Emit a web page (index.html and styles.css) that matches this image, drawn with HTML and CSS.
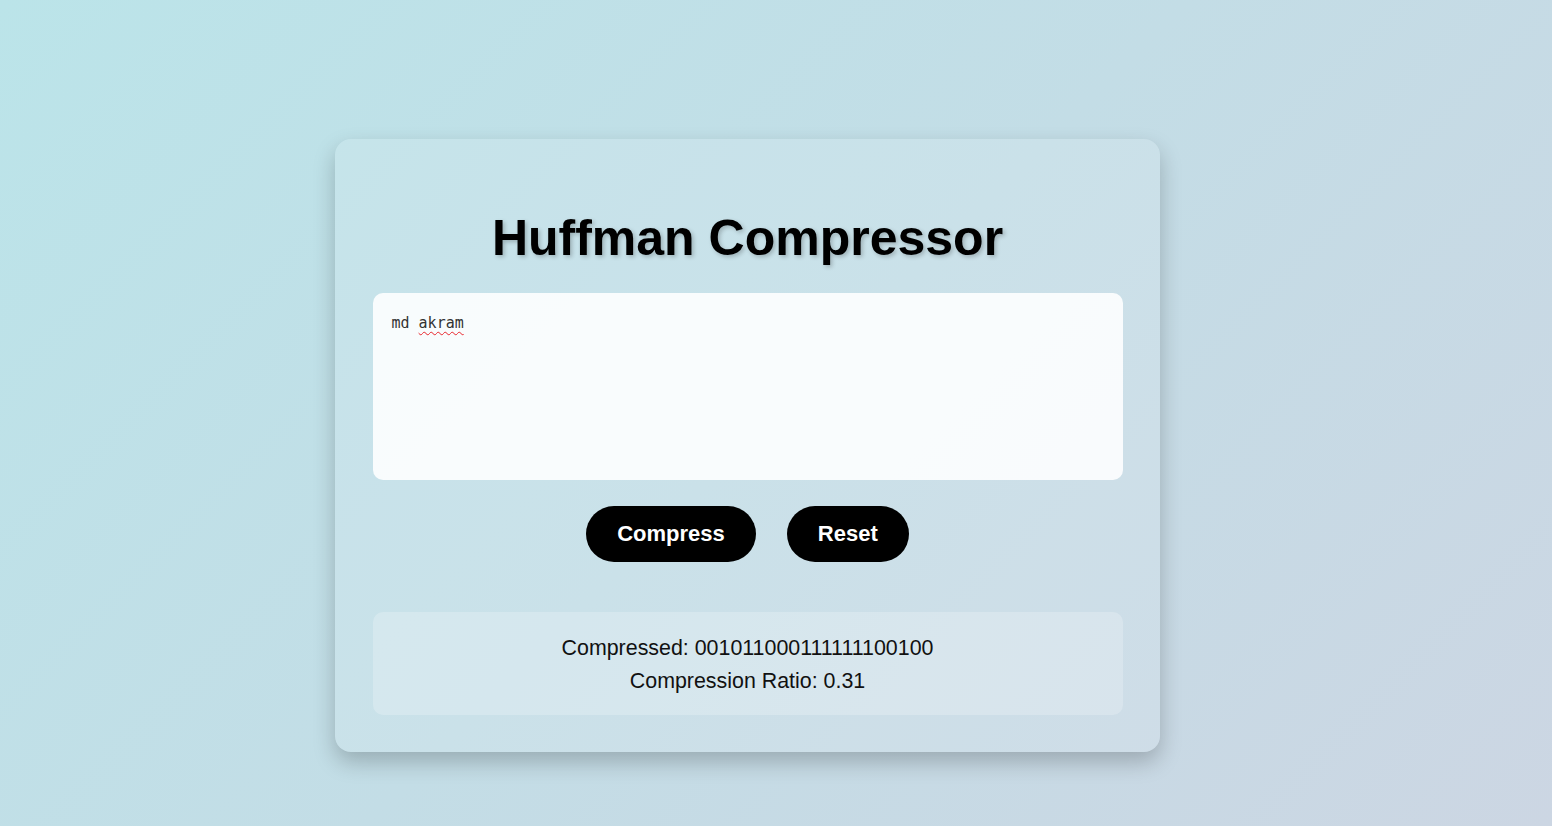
FILE: index.html
```html
<!DOCTYPE html>
<html lang="en">
<head>
<meta charset="utf-8">
<title>Huffman Compressor</title>
<link rel="stylesheet" href="styles.css">
</head>
<body>
<main class="page">
  <section class="card">
    <h1 class="title">Huffman Compressor</h1>
    <div class="input" contenteditable="true" spellcheck="false">md <span class="misspelled">akram</span></div>
    <div class="actions">
      <button class="btn" type="button">Compress</button>
      <button class="btn" type="button">Reset</button>
    </div>
    <div class="result">
      <div class="result-line">Compressed: 001011000111111100100</div>
      <div class="result-line">Compression Ratio: 0.31</div>
    </div>
  </section>
</main>
</body>
</html>
```

FILE: styles.css
```css
html, body {
  margin: 0;
  padding: 0;
  height: 100%;
}

body {
  font-family: "Liberation Sans", Arial, sans-serif;
  background: linear-gradient(135deg, #bbe4e9 0%, #c3dde6 50%, #ccd6e3 100%);
  color: #000;
}

.page {
  height: 826px;
  display: flex;
  justify-content: center;
  align-items: flex-start;
  padding: 139px 57px 0 0;
  box-sizing: border-box;
}

.card {
  width: 825px;
  box-sizing: border-box;
  padding: 37px 37.5px 37px;
  border-radius: 16px;
  background: rgba(255, 255, 255, 0.12);
  box-shadow: 0 10px 22px rgba(0, 0, 0, 0.22);
  display: flex;
  flex-direction: column;
}

.title {
  margin: 33px 0 26px;
  text-align: center;
  font-size: 50px;
  font-weight: bold;
  text-shadow: 2px 2px 4px rgba(0, 0, 0, 0.22);
}

.input {
  height: 187px;
  box-sizing: border-box;
  padding: 21px 17px 20px 19px;
  border-radius: 10px;
  background: rgba(255, 255, 255, 0.88);
  font-family: "DejaVu Sans Mono", "Liberation Mono", monospace;
  font-size: 15px;
  color: #333;
  outline: none;
  white-space: pre-wrap;
}

.misspelled {
  text-decoration: underline wavy #e8262c;
  text-decoration-thickness: 1px;
  text-underline-offset: 3px;
}

.actions {
  display: flex;
  justify-content: center;
  gap: 31px;
  margin-top: 26px;
}

.btn {
  height: 56px;
  padding: 0 31px;
  border: none;
  border-radius: 28px;
  background: #000;
  color: #fff;
  font-family: "Liberation Sans", Arial, sans-serif;
  font-size: 22px;
  font-weight: bold;
  cursor: pointer;
}

.result {
  margin-top: 50px;
  padding: 19.5px 20px 17.5px;
  border-radius: 10px;
  background: rgba(255, 255, 255, 0.22);
  text-align: center;
  font-size: 21.4px;
  color: #111;
}

.result-line {
  line-height: 33px;
}
```
